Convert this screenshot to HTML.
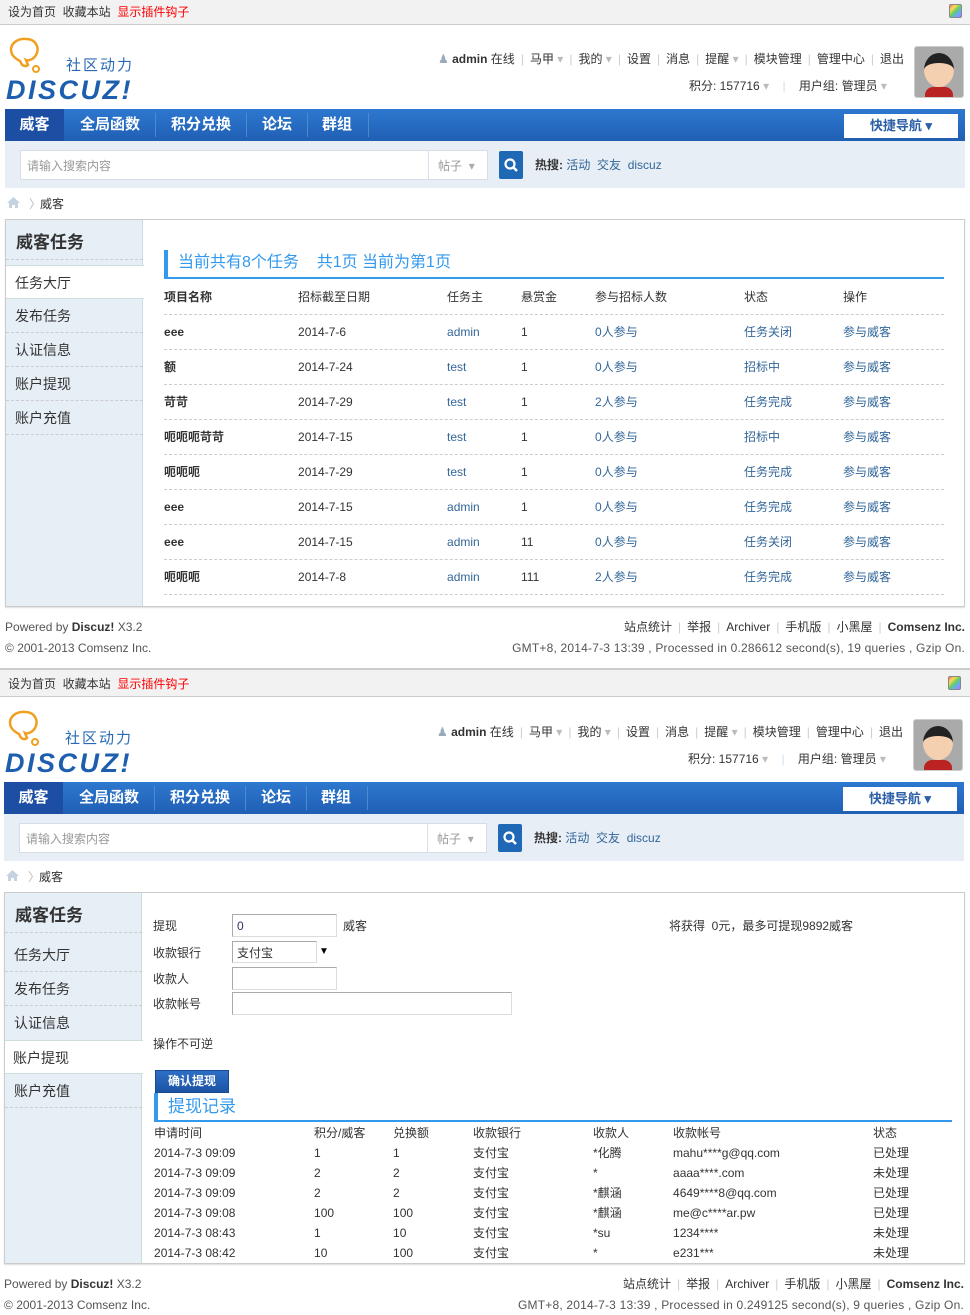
<!DOCTYPE html>
<html><head><meta charset="utf-8"><style>
*{margin:0;padding:0;box-sizing:border-box}
body{width:970px;height:1315px;position:relative;overflow:hidden;background:#fff;font-family:"Liberation Sans","Noto Sans CJK SC",sans-serif;font-size:12px;color:#333}
.a{position:absolute;white-space:nowrap;line-height:16px}
.a::before{content:"\3000";margin-right:-1em}
.l{position:absolute;white-space:nowrap}
.blk{position:absolute;left:0;width:970px;height:673px}
.top{position:absolute;left:0;top:0;width:970px;height:25px;background:#f2f2f2;border-bottom:1px solid #ccc}
.nav{position:absolute;left:5px;top:109px;width:960px;height:32px;background:linear-gradient(#2e78cf,#1f5fb4)}
.nav span{position:absolute;top:0;line-height:32px;color:#fff;font-weight:bold;font-size:15px}
.nav i{position:absolute;top:4px;width:1px;height:24px;background:#4f8ad0}
.srch{position:absolute;left:5px;top:141px;width:960px;height:47px;background:#e8eef5}
.lnk{color:#336699}
.s{color:#ccc;margin:0 6px}
.f .s{margin:0 6px}
.sb{position:absolute;left:6px;width:137px;background:#e6eef6;border-right:1px solid #cdd}
.sb div{position:absolute;left:0;width:137px;height:34px;line-height:34px;font-size:14px;padding-left:9px}
.dash{border-bottom:1px dashed #ccc}
.th{font-weight:bold}
.hl{position:absolute;height:0;border-top:1px dashed #ccc}
.inp{position:absolute;background:#fff;border:1px solid #aaa;border-right-color:#ddd;border-bottom-color:#ddd}
.gmt{letter-spacing:0.2px}
.logo{color:#1d5fae;font-size:27px;line-height:27px;font-weight:bold;font-style:italic;letter-spacing:2.5px}
</style></head><body>

<!-- BLOCK 1 -->
<div class="blk" style="top:0">
<div class="top"></div>
<div class="a" style="left:8px;top:4px">设为首页 &nbsp;收藏本站 &nbsp;<span style="color:#f00">显示插件钩子</span></div>
<div class="l" style="left:949px;top:4px;width:13px;height:14px;border:1px solid #888;border-radius:2px;background:linear-gradient(135deg,#f66,#fd5,#6c6,#6af,#c6f)"></div>
<svg class="l" style="left:6px;top:36px" width="40" height="38"><path d="M6 18 C2 8 12 2 20 3 C30 3 34 12 30 19 C27 24 22 25 20 24 L22 29 C20 31 16 30 15 27 C15 24 9 24 6 18Z" fill="none" stroke="#f0a020" stroke-width="2.5"/><circle cx="30" cy="33" r="3" fill="none" stroke="#f0a020" stroke-width="2"/></svg>
<div class="l" style="left:66px;top:57px;color:#2a6ab5;font-size:15px;line-height:18px;letter-spacing:2px">社区动力</div>
<div class="l logo" style="left:6px;top:77px">DISCUZ!</div>
<div class="a" style="left:438px;top:51px"><span style="color:#9ab">&#9823;</span> <b>admin</b> 在线<span class="s">|</span>马甲 <span style="color:#bbb">▾</span><span class="s">|</span>我的 <span style="color:#bbb">▾</span><span class="s">|</span>设置<span class="s">|</span>消息<span class="s">|</span>提醒 <span style="color:#bbb">▾</span><span class="s">|</span>模块管理<span class="s">|</span>管理中心<span class="s">|</span>退出</div>
<div class="a" style="left:689px;top:78px">积分: 157716 <span style="color:#bbb">▾</span> &nbsp; &nbsp;<span style="color:#cde">|</span> &nbsp; &nbsp;用户组: 管理员 <span style="color:#bbb">▾</span></div>
<div class="l" style="left:914px;top:46px;width:50px;height:52px;border:1px solid #ccc;border-radius:3px;background:#aaa;overflow:hidden"><div class="l" style="left:9px;top:6px;width:30px;height:34px;border-radius:50%;background:#f5d0b0;border-top:10px solid #222"></div><div class="l" style="left:10px;top:40px;width:28px;height:12px;background:#b22;border-radius:8px 8px 0 0"></div></div>
<div class="nav"><span style="left:0;width:59px;background:#1c4fa3;text-align:center;height:32px">威客</span><span style="left:75px">全局函数</span><i style="left:150px"></i><span style="left:166px">积分兑换</span><i style="left:241px"></i><span style="left:257px">论坛</span><i style="left:302px"></i><span style="left:317px">群组</span><i style="left:363px"></i>
<div class="l" style="left:839px;top:5px;width:114px;height:24px;background:#fff;color:#2b5fa6;font-weight:bold;font-size:13px;line-height:24px;text-align:center">快捷导航 ▾</div></div>
<div class="srch"><div class="inp" style="left:15px;top:9px;width:468px;height:30px;border:1px solid #d6dde6"></div><div class="a" style="left:22px;top:17px;color:#999">请输入搜索内容</div><div class="l" style="left:423px;top:10px;width:1px;height:28px;background:#dde"></div><div class="a" style="left:433px;top:17px;color:#999">帖子 &nbsp;<span style="color:#aaa">▾</span></div>
<div class="l" style="left:494px;top:10px;width:24px;height:28px;background:#1e68b5;border-radius:2px"><svg width="24" height="28"><circle cx="11" cy="13" r="4.5" fill="none" stroke="#fff" stroke-width="2.2"/><path d="M14 16 L18 20" stroke="#fff" stroke-width="2.6"/></svg></div>
<div class="a" style="left:530px;top:16px"><b>热搜:</b> <span class="lnk">活动 &nbsp;交友 &nbsp;discuz</span></div></div>
<svg class="l" style="left:6px;top:196px" width="15" height="13"><path d="M7.5 1 L1 7 H3 V12 H6 V9 H9 V12 H12 V7 H14Z" fill="#c5d3e0"/></svg><div class="a" style="left:29px;top:196px;color:#bbb">〉</div><div class="a" style="left:40px;top:196px">威客</div>
<div class="l" style="left:5px;top:219px;width:960px;height:388px;border:1px solid #ccc;box-shadow:0 1px 1px #ddd"></div>
<div class="sb" style="top:220px;height:386px">
<div style="top:6px;font-size:17px;font-weight:bold;padding-left:10px" class="dash">威客任务</div>
<div style="top:45px;background:#fff;border-top:1px solid #cdd;border-bottom:1px solid #cdd;width:138px">任务大厅</div>
<div class="dash" style="top:79px">发布任务</div>
<div class="dash" style="top:113px">认证信息</div>
<div class="dash" style="top:147px">账户提现</div>
<div class="dash" style="top:181px">账户充值</div></div>
<div class="l" style="left:164px;top:250px;width:4px;height:29px;background:#3399ee"></div>
<div class="l" style="left:164px;top:277px;width:780px;height:2px;background:#3399ee"></div>
<div class="a" style="left:178px;top:254px;color:#3399ee;font-size:16px;line-height:18px">当前共有8个任务 &nbsp;&nbsp;&nbsp;共1页 当前为第1页</div>
<div class="a th" style="left:164px;top:289px">项目名称</div><div class="a" style="left:298px;top:289px">招标截至日期</div><div class="a" style="left:447px;top:289px">任务主</div><div class="a" style="left:521px;top:289px">悬赏金</div><div class="a" style="left:595px;top:289px">参与招标人数</div><div class="a" style="left:744px;top:289px">状态</div><div class="a" style="left:843px;top:289px">操作</div>
<div class="hl" style="left:164px;top:314px;width:780px"></div><div class="hl" style="left:164px;top:349px;width:780px"></div><div class="hl" style="left:164px;top:384px;width:780px"></div><div class="hl" style="left:164px;top:419px;width:780px"></div><div class="hl" style="left:164px;top:454px;width:780px"></div><div class="hl" style="left:164px;top:489px;width:780px"></div><div class="hl" style="left:164px;top:524px;width:780px"></div><div class="hl" style="left:164px;top:559px;width:780px"></div><div class="hl" style="left:164px;top:594px;width:780px"></div>
<div class="a th" style="left:164px;top:324px">eee</div><div class="a" style="left:298px;top:324px">2014-7-6</div><div class="a lnk" style="left:447px;top:324px">admin</div><div class="a" style="left:521px;top:324px">1</div><div class="a lnk" style="left:595px;top:324px">0人参与</div><div class="a lnk" style="left:744px;top:324px">任务关闭</div><div class="a lnk" style="left:843px;top:324px">参与威客</div>
<div class="a th" style="left:164px;top:359px">额</div><div class="a" style="left:298px;top:359px">2014-7-24</div><div class="a lnk" style="left:447px;top:359px">test</div><div class="a" style="left:521px;top:359px">1</div><div class="a lnk" style="left:595px;top:359px">0人参与</div><div class="a lnk" style="left:744px;top:359px">招标中</div><div class="a lnk" style="left:843px;top:359px">参与威客</div>
<div class="a th" style="left:164px;top:394px">苛苛</div><div class="a" style="left:298px;top:394px">2014-7-29</div><div class="a lnk" style="left:447px;top:394px">test</div><div class="a" style="left:521px;top:394px">1</div><div class="a lnk" style="left:595px;top:394px">2人参与</div><div class="a lnk" style="left:744px;top:394px">任务完成</div><div class="a lnk" style="left:843px;top:394px">参与威客</div>
<div class="a th" style="left:164px;top:429px">呃呃呃苛苛</div><div class="a" style="left:298px;top:429px">2014-7-15</div><div class="a lnk" style="left:447px;top:429px">test</div><div class="a" style="left:521px;top:429px">1</div><div class="a lnk" style="left:595px;top:429px">0人参与</div><div class="a lnk" style="left:744px;top:429px">招标中</div><div class="a lnk" style="left:843px;top:429px">参与威客</div>
<div class="a th" style="left:164px;top:464px">呃呃呃</div><div class="a" style="left:298px;top:464px">2014-7-29</div><div class="a lnk" style="left:447px;top:464px">test</div><div class="a" style="left:521px;top:464px">1</div><div class="a lnk" style="left:595px;top:464px">0人参与</div><div class="a lnk" style="left:744px;top:464px">任务完成</div><div class="a lnk" style="left:843px;top:464px">参与威客</div>
<div class="a th" style="left:164px;top:499px">eee</div><div class="a" style="left:298px;top:499px">2014-7-15</div><div class="a lnk" style="left:447px;top:499px">admin</div><div class="a" style="left:521px;top:499px">1</div><div class="a lnk" style="left:595px;top:499px">0人参与</div><div class="a lnk" style="left:744px;top:499px">任务完成</div><div class="a lnk" style="left:843px;top:499px">参与威客</div>
<div class="a th" style="left:164px;top:534px">eee</div><div class="a" style="left:298px;top:534px">2014-7-15</div><div class="a lnk" style="left:447px;top:534px">admin</div><div class="a" style="left:521px;top:534px">11</div><div class="a lnk" style="left:595px;top:534px">0人参与</div><div class="a lnk" style="left:744px;top:534px">任务关闭</div><div class="a lnk" style="left:843px;top:534px">参与威客</div>
<div class="a th" style="left:164px;top:569px">呃呃呃</div><div class="a" style="left:298px;top:569px">2014-7-8</div><div class="a lnk" style="left:447px;top:569px">admin</div><div class="a" style="left:521px;top:569px">111</div><div class="a lnk" style="left:595px;top:569px">2人参与</div><div class="a lnk" style="left:744px;top:569px">任务完成</div><div class="a lnk" style="left:843px;top:569px">参与威客</div>
<div class="a" style="left:5px;top:619px;color:#555">Powered by <b style="color:#333">Discuz!</b> X3.2</div>
<div class="a" style="left:5px;top:640px;color:#555">© 2001-2013 Comsenz Inc.</div>
<div class="a f" style="right:5px;top:619px">站点统计<span class="s">|</span>举报<span class="s">|</span>Archiver<span class="s">|</span>手机版<span class="s">|</span>小黑屋<span class="s">|</span><b>Comsenz Inc.</b></div>
<div class="a gmt" style="right:5px;top:640px;color:#555">GMT+8, 2014-7-3 13:39 , Processed in 0.286612 second(s), 19 queries , Gzip On.</div>
</div>

<!-- BLOCK 2 -->
<div class="blk" style="top:668px;height:647px">
<div class="top" style="border-top:2px solid #ccc;top:0;height:29px"></div>
<div class="a" style="left:8px;top:8px">设为首页 &nbsp;收藏本站 &nbsp;<span style="color:#f00">显示插件钩子</span></div>
<div class="l" style="left:948px;top:8px;width:13px;height:14px;border:1px solid #888;border-radius:2px;background:linear-gradient(135deg,#f66,#fd5,#6c6,#6af,#c6f)"></div>
<svg class="l" style="left:5px;top:41px" width="40" height="38"><path d="M6 18 C2 8 12 2 20 3 C30 3 34 12 30 19 C27 24 22 25 20 24 L22 29 C20 31 16 30 15 27 C15 24 9 24 6 18Z" fill="none" stroke="#f0a020" stroke-width="2.5"/><circle cx="30" cy="33" r="3" fill="none" stroke="#f0a020" stroke-width="2"/></svg>
<div class="l" style="left:65px;top:62px;color:#2a6ab5;font-size:15px;line-height:18px;letter-spacing:2px">社区动力</div>
<div class="l logo" style="left:5px;top:82px">DISCUZ!</div>
<div class="a" style="left:437px;top:56px"><span style="color:#9ab">&#9823;</span> <b>admin</b> 在线<span class="s">|</span>马甲 <span style="color:#bbb">▾</span><span class="s">|</span>我的 <span style="color:#bbb">▾</span><span class="s">|</span>设置<span class="s">|</span>消息<span class="s">|</span>提醒 <span style="color:#bbb">▾</span><span class="s">|</span>模块管理<span class="s">|</span>管理中心<span class="s">|</span>退出</div>
<div class="a" style="left:688px;top:83px">积分: 157716 <span style="color:#bbb">▾</span> &nbsp; &nbsp;<span style="color:#cde">|</span> &nbsp; &nbsp;用户组: 管理员 <span style="color:#bbb">▾</span></div>
<div class="l" style="left:913px;top:51px;width:50px;height:52px;border:1px solid #ccc;border-radius:3px;background:#aaa;overflow:hidden"><div class="l" style="left:9px;top:6px;width:30px;height:34px;border-radius:50%;background:#f5d0b0;border-top:10px solid #222"></div><div class="l" style="left:10px;top:40px;width:28px;height:12px;background:#b22;border-radius:8px 8px 0 0"></div></div>
<div class="nav" style="left:4px;top:114px"><span style="left:0;width:59px;background:#1c4fa3;text-align:center;height:32px">威客</span><span style="left:75px">全局函数</span><i style="left:150px"></i><span style="left:166px">积分兑换</span><i style="left:241px"></i><span style="left:257px">论坛</span><i style="left:302px"></i><span style="left:317px">群组</span><i style="left:363px"></i>
<div class="l" style="left:839px;top:5px;width:114px;height:24px;background:#fff;color:#2b5fa6;font-weight:bold;font-size:13px;line-height:24px;text-align:center">快捷导航 ▾</div></div>
<div class="srch" style="left:4px;top:146px"><div class="inp" style="left:15px;top:9px;width:468px;height:30px;border:1px solid #d6dde6"></div><div class="a" style="left:22px;top:17px;color:#999">请输入搜索内容</div><div class="l" style="left:423px;top:10px;width:1px;height:28px;background:#dde"></div><div class="a" style="left:433px;top:17px;color:#999">帖子 &nbsp;<span style="color:#aaa">▾</span></div>
<div class="l" style="left:494px;top:10px;width:24px;height:28px;background:#1e68b5;border-radius:2px"><svg width="24" height="28"><circle cx="11" cy="13" r="4.5" fill="none" stroke="#fff" stroke-width="2.2"/><path d="M14 16 L18 20" stroke="#fff" stroke-width="2.6"/></svg></div>
<div class="a" style="left:530px;top:16px"><b>热搜:</b> <span class="lnk">活动 &nbsp;交友 &nbsp;discuz</span></div></div>
<svg class="l" style="left:5px;top:201px" width="15" height="13"><path d="M7.5 1 L1 7 H3 V12 H6 V9 H9 V12 H12 V7 H14Z" fill="#c5d3e0"/></svg><div class="a" style="left:28px;top:201px;color:#bbb">〉</div><div class="a" style="left:39px;top:201px">威客</div>
<div class="l" style="left:4px;top:224px;width:961px;height:372px;border:1px solid #ccc;box-shadow:0 1px 1px #ddd"></div>
<div class="sb" style="left:5px;top:225px;height:370px">
<div style="top:6px;font-size:17px;font-weight:bold;padding-left:10px" class="dash">威客任务</div>
<div class="dash" style="top:45px">任务大厅</div>
<div class="dash" style="top:79px">发布任务</div>
<div style="top:113px">认证信息</div>
<div style="top:147px;background:#fff;border-top:1px solid #cdd;border-bottom:1px solid #cdd;width:138px;padding-left:8px">账户提现</div>
<div class="dash" style="top:181px">账户充值</div></div>
<div class="a" style="left:153px;top:250px">提现</div><div class="inp" style="left:232px;top:246px;width:105px;height:23px"></div><div class="a" style="left:237px;top:250px;color:#336">0</div><div class="a" style="left:343px;top:250px">威客</div>
<div class="a" style="left:669px;top:250px">将获得 &nbsp;0元，最多可提现9892威客</div>
<div class="a" style="left:153px;top:277px">收款银行</div><div class="inp" style="left:232px;top:273px;width:85px;height:22px"></div><div class="a" style="left:237px;top:277px">支付宝</div><div class="l" style="left:319px;top:277px;font-size:10px;line-height:14px;color:#000">▼</div>
<div class="a" style="left:153px;top:303px">收款人</div><div class="inp" style="left:232px;top:299px;width:105px;height:23px"></div>
<div class="a" style="left:153px;top:328px">收款帐号</div><div class="inp" style="left:232px;top:324px;width:280px;height:23px"></div>
<div class="a" style="left:153px;top:368px">操作不可逆</div>
<div class="l" style="left:155px;top:402px;width:74px;height:23px;background:linear-gradient(#2d6fc6,#1d53a5);border:1px solid #1a4a90;color:#fff;font-weight:bold;text-align:center;line-height:21px">确认提现</div>
<div class="l" style="left:154px;top:425px;width:4px;height:28px;background:#3399ee"></div>
<div class="l" style="left:154px;top:452px;width:798px;height:2px;background:#3399ee"></div>
<div class="a" style="left:168px;top:429px;color:#3399ee;font-size:17px;line-height:20px">提现记录</div>
<div class="a" style="left:154px;top:457px">申请时间</div><div class="a" style="left:314px;top:457px">积分/威客</div><div class="a" style="left:393px;top:457px">兑换额</div><div class="a" style="left:473px;top:457px">收款银行</div><div class="a" style="left:593px;top:457px">收款人</div><div class="a" style="left:673px;top:457px">收款帐号</div><div class="a" style="left:873px;top:457px">状态</div>
<div class="a" style="left:154px;top:477px">2014-7-3 09:09</div><div class="a" style="left:314px;top:477px">1</div><div class="a" style="left:393px;top:477px">1</div><div class="a" style="left:473px;top:477px">支付宝</div><div class="a" style="left:593px;top:477px">*化腾</div><div class="a" style="left:673px;top:477px">mahu****g@qq.com</div><div class="a" style="left:873px;top:477px">已处理</div>
<div class="a" style="left:154px;top:497px">2014-7-3 09:09</div><div class="a" style="left:314px;top:497px">2</div><div class="a" style="left:393px;top:497px">2</div><div class="a" style="left:473px;top:497px">支付宝</div><div class="a" style="left:593px;top:497px">*</div><div class="a" style="left:673px;top:497px">aaaa****.com</div><div class="a" style="left:873px;top:497px">未处理</div>
<div class="a" style="left:154px;top:517px">2014-7-3 09:09</div><div class="a" style="left:314px;top:517px">2</div><div class="a" style="left:393px;top:517px">2</div><div class="a" style="left:473px;top:517px">支付宝</div><div class="a" style="left:593px;top:517px">*麒涵</div><div class="a" style="left:673px;top:517px">4649****8@qq.com</div><div class="a" style="left:873px;top:517px">已处理</div>
<div class="a" style="left:154px;top:537px">2014-7-3 09:08</div><div class="a" style="left:314px;top:537px">100</div><div class="a" style="left:393px;top:537px">100</div><div class="a" style="left:473px;top:537px">支付宝</div><div class="a" style="left:593px;top:537px">*麒涵</div><div class="a" style="left:673px;top:537px">me@c****ar.pw</div><div class="a" style="left:873px;top:537px">已处理</div>
<div class="a" style="left:154px;top:557px">2014-7-3 08:43</div><div class="a" style="left:314px;top:557px">1</div><div class="a" style="left:393px;top:557px">10</div><div class="a" style="left:473px;top:557px">支付宝</div><div class="a" style="left:593px;top:557px">*su</div><div class="a" style="left:673px;top:557px">1234****</div><div class="a" style="left:873px;top:557px">未处理</div>
<div class="a" style="left:154px;top:577px">2014-7-3 08:42</div><div class="a" style="left:314px;top:577px">10</div><div class="a" style="left:393px;top:577px">100</div><div class="a" style="left:473px;top:577px">支付宝</div><div class="a" style="left:593px;top:577px">*</div><div class="a" style="left:673px;top:577px">e231***</div><div class="a" style="left:873px;top:577px">未处理</div>
<div class="a" style="left:4px;top:608px;color:#555">Powered by <b style="color:#333">Discuz!</b> X3.2</div>
<div class="a" style="left:4px;top:629px;color:#555">© 2001-2013 Comsenz Inc.</div>
<div class="a f" style="right:6px;top:608px">站点统计<span class="s">|</span>举报<span class="s">|</span>Archiver<span class="s">|</span>手机版<span class="s">|</span>小黑屋<span class="s">|</span><b>Comsenz Inc.</b></div>
<div class="a gmt" style="right:6px;top:629px;color:#555">GMT+8, 2014-7-3 13:39 , Processed in 0.249125 second(s), 9 queries , Gzip On.</div>
</div>
</body></html>
